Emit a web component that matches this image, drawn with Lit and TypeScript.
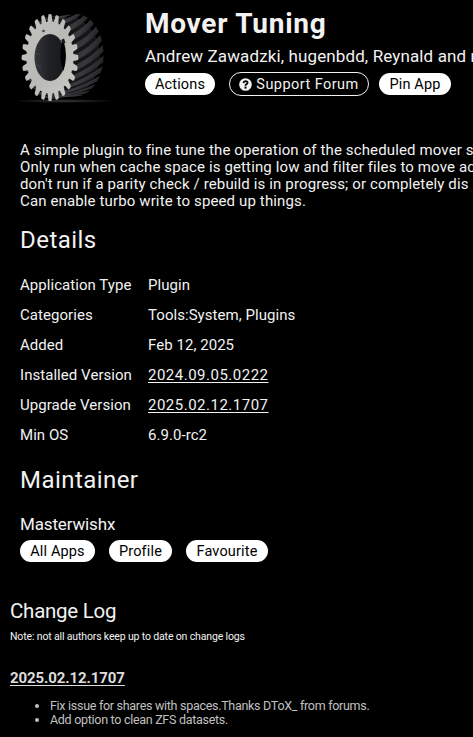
import { LitElement, html, css, svg } from 'lit';
import { customElement, property } from 'lit/decorators.js';

const TEETH = 24;
const TWIST = -0.42;

type Point = [number, number];

const onEllipse = (cx: number, cy: number, rx: number, ry: number, angle: number): Point => [
  cx + rx * Math.cos(angle),
  cy + ry * Math.sin(angle)
];

const pair = ([x, y]: Point) => `${x.toFixed(1)} ${y.toFixed(1)}`;

const face = (cx: number, cy: number, rx: number, ry: number) => {
  const step = (Math.PI * 2) / TEETH;
  let d = '';
  for (let i = 0; i < TEETH; i++) {
    const a = i * step;
    const root = (t: number) => pair(onEllipse(cx, cy, rx * 0.84, ry * 0.84, a + t * step));
    const tip = (t: number) => pair(onEllipse(cx, cy, rx, ry, a + t * step));
    d += `${i ? 'L' : 'M'}${root(-0.38)} L${tip(-0.22)} Q${pair(onEllipse(cx, cy, rx * 1.03, ry * 1.03, a))} ${tip(0.22)} L${root(0.38)} Q${root(0.5)} ${root(0.62)} `;
  }
  return d + 'Z';
};

@customElement('gear-icon')
export class GearIcon extends LitElement {
  static styles = css`
    :host {
      display: block;
    }

    svg {
      display: block;
    }
  `;

  _ribs() {
    const step = (Math.PI * 2) / TEETH;
    return [...Array(TEETH)].map((_, i) => {
      const a = i * step;
      const p1 = onEllipse(50, 57.5, 26, 41, a - step * 0.25);
      const p2 = onEllipse(50, 57.5, 26, 41, a + step * 0.3);
      const p3 = onEllipse(76.5, 55, 27, 41, a + TWIST + step * 0.28);
      const p4 = onEllipse(76.5, 55, 27, 41, a + TWIST - step * 0.28);
      const top = onEllipse(65, 56.5, 28, 41, a + TWIST * 0.45 - step * 0.25);
      const bottom = onEllipse(65, 56.5, 28, 41, a + TWIST * 0.45 + step * 0.28);
      return svg`
        <path d="M${pair(p1)} Q${pair(top)} ${pair(p4)} L${pair(p3)} Q${pair(bottom)} ${pair(p2)} Z" fill="url(#rib)" />
        <path d="M${pair(p1)} Q${pair(top)} ${pair(p4)}" fill="none" stroke="#454549" stroke-width="0.6" />
      `;
    });
  }

  render() {
    return html`
      <svg width="120" height="115" viewBox="0 0 120 115" aria-hidden="true">
        <defs>
          <linearGradient id="rib" x1="0" y1="0" x2="1" y2="0.3">
            <stop offset="0" stop-color="#29292c" />
            <stop offset="0.5" stop-color="#3a393c" />
            <stop offset="1" stop-color="#242427" />
          </linearGradient>
          <linearGradient id="metal" x1="0" y1="0" x2="1" y2="1">
            <stop offset="0" stop-color="#c3c4bf" />
            <stop offset="0.5" stop-color="#b9bab5" />
            <stop offset="1" stop-color="#cbccc6" />
          </linearGradient>
          <linearGradient id="bore" x1="0" y1="0" x2="1" y2="0">
            <stop offset="0" stop-color="#34363b" />
            <stop offset="0.45" stop-color="#202226" />
            <stop offset="1" stop-color="#17181b" />
          </linearGradient>
          <radialGradient id="floor">
            <stop offset="0" stop-color="#3a3a3a" />
            <stop offset="1" stop-color="#000" />
          </radialGradient>
        </defs>
        <ellipse cx="64" cy="101" rx="52" ry="2" fill="url(#floor)" />
        <path d="M50 20 L76 17 Q100 30 100 56 Q98 82 80 94 L50 98 Z" fill="#161618" />
        ${this._ribs()}
        <path d=${face(50, 57.5, 28, 43)} fill="url(#metal)" />
        <ellipse cx="50" cy="57.5" rx="15.5" ry="23.5" fill="url(#bore)" />
        <path d="M62 42 Q58 57 63.5 71 Q68 56 64 42 Z" fill="#000" />
        <path d="M61 40 L64 38.5 L65.5 43 L63 43.5 Z" fill="#17181b" />
        <path d="M36 53 L40 55 M36 65 L41 67" stroke="#44464e" stroke-width="1" />
        <circle cx="43.5" cy="31" r="1.3" fill="#44443f" />
      </svg>
    `;
  }
}

@customElement('pill-button')
export class PillButton extends LitElement {
  @property({ type: Boolean, reflect: true }) outlined = false;

  static styles = css`
    :host {
      display: block;
      box-sizing: border-box;
      height: 22px;
      border-radius: 12px;
      background: #fff;
      color: #000;
      font-size: 14.5px;
      line-height: 23px;
      text-align: center;
      white-space: nowrap;
      letter-spacing: 0.15px;
    }

    :host([outlined]) {
      height: 24px;
      border: 1px solid #f2f2f2;
      background: #000;
      color: #f2f2f2;
      letter-spacing: 0.45px;
    }
  `;

  render() {
    return html`<slot></slot>`;
  }
}

@customElement('app-root')
export class AppRoot extends LitElement {
  details = [
    { label: 'Application Type', value: 'Plugin' },
    { label: 'Categories', value: 'Tools:System, Plugins' },
    { label: 'Added', value: 'Feb 12, 2025' },
    { label: 'Installed Version', value: '2024.09.05.0222', link: true },
    { label: 'Upgrade Version', value: '2025.02.12.1707', link: true },
    { label: 'Min OS', value: '6.9.0-rc2' }
  ];

  static styles = css`
    :host {
      display: block;
      box-sizing: border-box;
      width: 473px;
      height: 737px;
      overflow: hidden;
      background: #000;
      color: #f2f2f2;
      font-family: Roboto, 'Liberation Sans', sans-serif;
      white-space: nowrap;
    }

    .header {
      display: flex;
      height: 142px;
    }

    .icon {
      width: 145px;
      flex: none;
    }

    .title {
      margin: 0;
      padding-top: 7px;
      font-size: 28px;
      font-weight: 700;
      line-height: 34px;
      letter-spacing: 0.75px;
    }

    .authors {
      padding-top: 3px;
      font-size: 17px;
      line-height: 24px;
      letter-spacing: 0.12px;
    }

    .buttons {
      display: flex;
      align-items: center;
    }

    .header .buttons {
      padding-top: 4px;
    }

    .actions {
      width: 70px;
      margin-right: 14px;
    }

    .support {
      width: 140px;
      margin-right: 10px;
    }

    .pin {
      width: 72px;
    }

    .help {
      width: 13px;
      height: 13px;
      vertical-align: -2px;
    }

    .body {
      padding-left: 20px;
    }

    .description {
      font-size: 15px;
      line-height: 17px;
      letter-spacing: 0.13px;
    }

    .heading {
      margin: 0;
      font-size: 24px;
      font-weight: 400;
      line-height: 30px;
      letter-spacing: 0.45px;
    }

    .details-heading {
      padding: 15px 0 15px;
    }

    .details {
      display: grid;
      grid-template-columns: 128px 1fr;
      grid-auto-rows: 30px;
      margin: 0;
      font-size: 15px;
      line-height: 30px;
      letter-spacing: 0.05px;
    }

    .details dd {
      margin: 0;
    }

    .version {
      letter-spacing: 0.5px;
      text-decoration: underline;
      text-underline-offset: 2px;
    }

    .maintainer-heading {
      padding: 15px 0 14px;
    }

    .maintainer {
      font-size: 17px;
      line-height: 30px;
      letter-spacing: -0.15px;
      padding-bottom: 1px;
    }

    .all-apps {
      width: 75px;
      margin-right: 14px;
    }

    .profile {
      width: 63px;
      margin-right: 14px;
    }

    .favourite {
      width: 82px;
    }

    .changes {
      padding: 36px 0 0 10px;
    }

    .changes-heading {
      font-size: 20.5px;
      line-height: 26px;
      letter-spacing: -0.25px;
    }

    .note {
      font-size: 10.5px;
      line-height: 14px;
      letter-spacing: -0.15px;
      padding-top: 6px;
    }

    .release {
      padding-top: 24px;
      font-size: 15px;
      font-weight: 700;
      line-height: 20px;
      letter-spacing: -0.1px;
      text-decoration: underline;
      text-underline-offset: 2px;
      color: #ddd;
    }

    .entries {
      margin: 0;
      padding: 11px 0 0 40px;
      color: #c0c0c0;
      font-size: 12.5px;
      line-height: 14px;
      letter-spacing: -0.29px;
    }
  `;

  render() {
    return html`
      <div class="header">
        <gear-icon class="icon"></gear-icon>
        <div>
          <h1 class="title">Mover Tuning</h1>
          <div class="authors">Andrew Zawadzki, hugenbdd, Reynald and m</div>
          <div class="buttons">
            <pill-button class="actions">Actions</pill-button>
            <pill-button class="support" outlined>
              <svg class="help" viewBox="0 0 14 14" aria-hidden="true">
                <circle cx="7" cy="7" r="6.8" fill="#f2f2f2" />
                <path d="M4.7 5.4 Q5.1 3.4 7.1 3.4 Q9.3 3.5 9.2 5.3 Q9 6.3 7.8 6.9 Q7 7.4 7 8.4" fill="none" stroke="#000" stroke-width="2" />
                <rect x="5.9" y="9.3" width="2.2" height="2.1" fill="#000" />
              </svg>
              Support Forum
            </pill-button>
            <pill-button class="pin">Pin App</pill-button>
          </div>
        </div>
      </div>

      <div class="body">
        <div class="description">
          <div>A simple plugin to fine tune the operation of the scheduled mover sc</div>
          <div>Only run when cache space is getting low and filter files to move acc</div>
          <div>don't run if a parity check / rebuild is in progress; or completely dis</div>
          <div>Can enable turbo write to speed up things.</div>
        </div>

        <h2 class="heading details-heading">Details</h2>
        <dl class="details">
          ${this.details.map(item => html`
            <dt>${item.label}</dt>
            <dd><span class="${item.link ? 'version' : ''}">${item.value}</span></dd>
          `)}
        </dl>

        <h2 class="heading maintainer-heading">Maintainer</h2>
        <div class="maintainer">Masterwishx</div>
        <div class="buttons">
          <pill-button class="all-apps">All Apps</pill-button>
          <pill-button class="profile">Profile</pill-button>
          <pill-button class="favourite">Favourite</pill-button>
        </div>
      </div>

      <div class="changes">
        <div class="changes-heading">Change Log</div>
        <div class="note">Note: not all authors keep up to date on change logs</div>
        <div class="release">2025.02.12.1707</div>
        <ul class="entries">
          <li>Fix issue for shares with spaces.Thanks DToX_ from forums.</li>
          <li>Add option to clean ZFS datasets.</li>
        </ul>
      </div>
    `;
  }
}
